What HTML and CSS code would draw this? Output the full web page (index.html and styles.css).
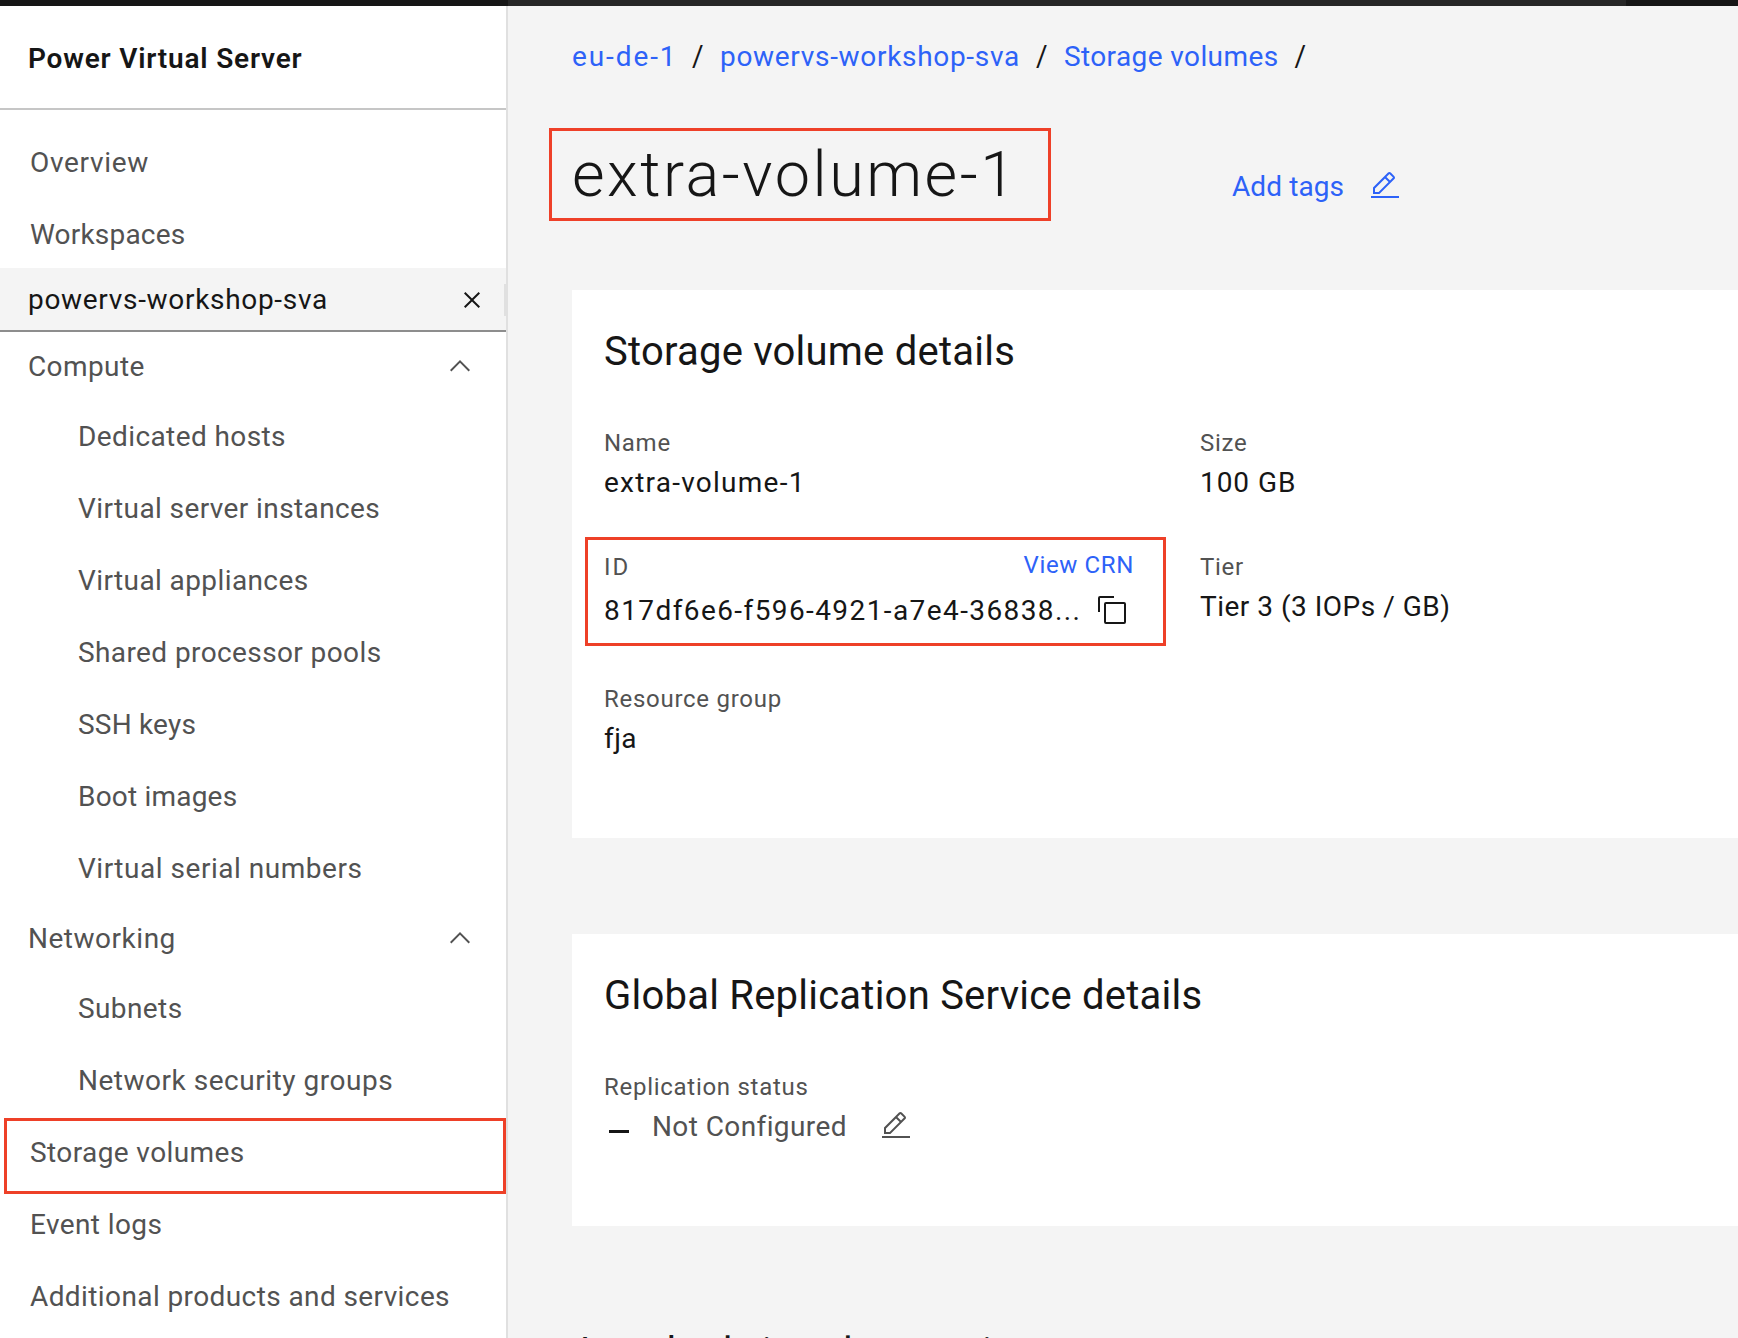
FILE: index.html
```html
<!DOCTYPE html>
<html lang="en">
<head>
<meta charset="utf-8">
<title>extra-volume-1 - Power Virtual Server</title>
<link rel="stylesheet" href="styles.css">
</head>
<body>
<svg width="0" height="0" class="sprite" aria-hidden="true">
  <symbol id="edit" viewBox="0 0 32 32"><path d="M2 26H30V28H2zM25.4 9c.8-.8.8-2 0-2.8l-3.6-3.6c-.8-.8-2-.8-2.8 0l-15 15V24h6.4L25.4 9zM20.4 4L24 7.6l-3 3L17.4 7 20.4 4zM6 22v-3.6l10-10 3.6 3.6-10 10H6z"/></symbol>
  <symbol id="chevron" viewBox="0 0 16 16"><path d="M8 5L13 10 12.3 10.7 8 6.4 3.7 10.7 3 10z"/></symbol>
  <symbol id="close" viewBox="0 0 32 32"><path d="M24 9.4L22.6 8 16 14.6 9.4 8 8 9.4l6.6 6.6L8 22.6 9.4 24l6.6-6.6 6.6 6.6 1.4-1.4-6.6-6.6z"/></symbol>
  <symbol id="copy" viewBox="0 0 32 32"><path d="M28 10V28H10V10H28m0-2H10a2 2 0 0 0-2 2V28a2 2 0 0 0 2 2H28a2 2 0 0 0 2-2V10a2 2 0 0 0-2-2ZM4 18H2V4A2 2 0 0 1 4 2H18V4H4Z"/></symbol>
</svg>
<div class="topbar"><div class="topbar-menu"></div><div class="topbar-search"></div></div>
<div class="shell">
  <aside class="sidebar">
    <div class="product">Power Virtual Server</div>
    <nav class="nav">
      <a class="row spaced">Overview</a>
      <a class="row snug">Workspaces</a>
      <div class="active"><span class="hyphenated">powervs-workshop-sva</span><svg class="icon"><use href="#close"/></svg><i class="thumb"></i></div>
      <div class="group"><span>Compute</span><svg class="icon"><use href="#chevron"/></svg></div>
      <a class="row sub">Dedicated hosts</a>
      <a class="row sub">Virtual server instances</a>
      <a class="row sub">Virtual appliances</a>
      <a class="row sub">Shared processor pools</a>
      <a class="row sub snug">SSH keys</a>
      <a class="row sub snug">Boot images</a>
      <a class="row sub loose">Virtual serial numbers</a>
      <div class="group later"><span class="loose">Networking</span><svg class="icon"><use href="#chevron"/></svg></div>
      <a class="row sub">Subnets</a>
      <a class="row sub loose">Network security groups</a>
      <a class="row marked">Storage volumes</a>
      <a class="row">Event logs</a>
      <a class="row">Additional products and services</a>
    </nav>
  </aside>
  <main class="main">
    <div class="breadcrumb">
      <a class="region">eu-de-1</a><span class="slash">/</span><a class="hyphenated">powervs-workshop-sva</a><span class="slash">/</span><a>Storage volumes</a><span class="slash">/</span>
    </div>
    <div class="heading">
      <h1>extra-volume-1</h1>
      <a class="tags">Add tags</a>
      <svg class="icon tags-icon"><use href="#edit"/></svg>
    </div>
    <section class="card details">
      <h2>Storage volume details</h2>
      <div class="fields">
        <div><div class="label">Name</div><div class="value dashed">extra-volume-1</div></div>
        <div><div class="label">Size</div><div class="value amount">100 GB</div></div>
        <div class="id-field">
          <div class="id-head"><span class="label id-label">ID</span><a class="label crn">View CRN</a></div>
          <div class="id-value"><span class="value uuid">817df6e6-f596-4921-a7e4-36838...</span><svg class="icon"><use href="#copy"/></svg></div>
        </div>
        <div><div class="label">Tier</div><div class="value tier">Tier 3 (3 IOPs / GB)</div></div>
        <div><div class="label">Resource group</div><div class="value">fja</div></div>
      </div>
    </section>
    <section class="card replication">
      <h2>Global Replication Service details</h2>
      <div class="status-field">
        <div class="label">Replication status</div>
        <div class="status"><i class="dash"></i><span class="status-text">Not Configured</span><svg class="icon"><use href="#edit"/></svg></div>
      </div>
    </section>
    <h2 class="next">Attached virtual server instances</h2>
  </main>
</div>
</body>
</html>
```

FILE: styles.css
```css
*, *::before, *::after { box-sizing: border-box; }
body {
  margin: 0;
  height: 1338px;
  overflow: hidden;
  background: #f4f4f4;
  color: #161616;
  font-family: Roboto, "Open Sans", sans-serif;
  font-size: 28px;
  letter-spacing: 0.4px;
  white-space: nowrap;
}
h1, h2 { margin: 0; font-weight: 400; }
.sprite { display: none; }
.icon { width: 32px; height: 32px; fill: currentColor; flex: none; display: block; }

.topbar { display: flex; height: 6px; background: #161616; }
.topbar-menu { width: 508px; }
.topbar-search { width: 1118px; background: #262626; }
.shell { display: flex; height: 1332px; }

.sidebar { flex: none; width: 508px; background: #fff; border-right: 2px solid #e0e0e0; color: #525252; }
.product {
  height: 104px;
  padding: 1px 0 0 28px;
  border-bottom: 2px solid #c6c6c6;
  color: #161616;
  font-weight: 600;
  letter-spacing: 0.8px;
  line-height: 104px;
}
.nav { padding-top: 14px; }
.row { display: block; height: 72px; padding: 5px 0 0 30px; line-height: 68px; }
.sub { padding-left: 78px; }
.spaced { letter-spacing: 0.69px; }
.snug { letter-spacing: 0.2px; }
.loose { letter-spacing: 0.52px; }
.hyphenated { letter-spacing: 0.69px; }
.active {
  position: relative;
  display: flex;
  justify-content: space-between;
  height: 64px;
  padding: 1px 18px 0 28px;
  background: #f4f4f4;
  border-bottom: 2px solid #8d8d8d;
  color: #161616;
  line-height: 62px;
}
.active .icon { margin-top: 15px; }
.thumb { position: absolute; right: 0; top: 16px; width: 2px; height: 32px; background: #e0e0e0; }
.group {
  display: flex;
  justify-content: space-between;
  height: 66px;
  padding: 3px 30px 0 28px;
  line-height: 64px;
}
.group .icon { margin-top: 15px; }
.later { margin-top: 2px; }
.marked { position: relative; }
.marked::after { content: ""; position: absolute; inset: 4px 0 -8px 4px; border: 3px solid #ee4028; }

.main { flex: 1; padding: 31px 0 0 64px; }
.breadcrumb { display: flex; height: 40px; line-height: 40px; }
.breadcrumb a, .tags, .label.crn { color: #2d62f8; }
.region { width: 104px; letter-spacing: 1.9px; }
.slash { width: 44px; padding-left: 16px; transform: scaleY(1.05); }

.heading { display: flex; align-items: baseline; margin-top: 51px; }
h1 {
  width: 502px;
  height: 93px;
  margin-left: -23px;
  padding-left: 20px;
  border: 3px solid #ee4028;
  font-size: 63px;
  font-weight: 300;
  letter-spacing: 2.5px;
  line-height: 87px;
}
.tags { margin-left: 181px; letter-spacing: 0.1px; }
.tags-icon { align-self: flex-start; margin: 42px 0 0 25px; color: #2d62f8; }

.card { background: #fff; padding: 38px 32px 0; }
.details { height: 548px; margin-top: 69px; }
.replication { height: 292px; margin-top: 96px; }
h2 { font-size: 40px; line-height: 48px; letter-spacing: 0.23px; }
.fields {
  display: grid;
  grid-template-columns: 596px auto;
  grid-template-rows: 74px 82px 74px;
  row-gap: 50px;
  margin-top: 51px;
}
.label { height: 32px; color: #525252; font-size: 24px; line-height: 32px; letter-spacing: 0.72px; }
.value { margin-top: 6px; height: 36px; line-height: 36px; }
.dashed { letter-spacing: 1.24px; }
.amount { letter-spacing: 0.95px; }
.tier { letter-spacing: 0.5px; }
.id-field { position: relative; }
.id-field::after { content: ""; position: absolute; left: -19px; top: -14px; width: 581px; height: 109px; border: 3px solid #ee4028; }
.id-head { display: flex; justify-content: space-between; width: 530px; }
.id-label { letter-spacing: 2px; }
.crn { margin-top: -2px; letter-spacing: 0.64px; }
.id-value { display: flex; justify-content: space-between; width: 524px; margin-top: 10px; }
.uuid { margin-top: 0; letter-spacing: 1.41px; }
.id-value .icon { margin-top: 1px; }
.status-field { margin-top: 51px; }
.status { display: flex; height: 36px; margin-top: 6px; line-height: 36px; color: #525252; }
.dash { width: 20px; height: 3px; margin: 21px 23px 0 5px; background: #161616; }
.status-text { width: 228px; }
.status .icon { margin-top: 1px; }
.next { margin-top: 103px; letter-spacing: 0; }
```
